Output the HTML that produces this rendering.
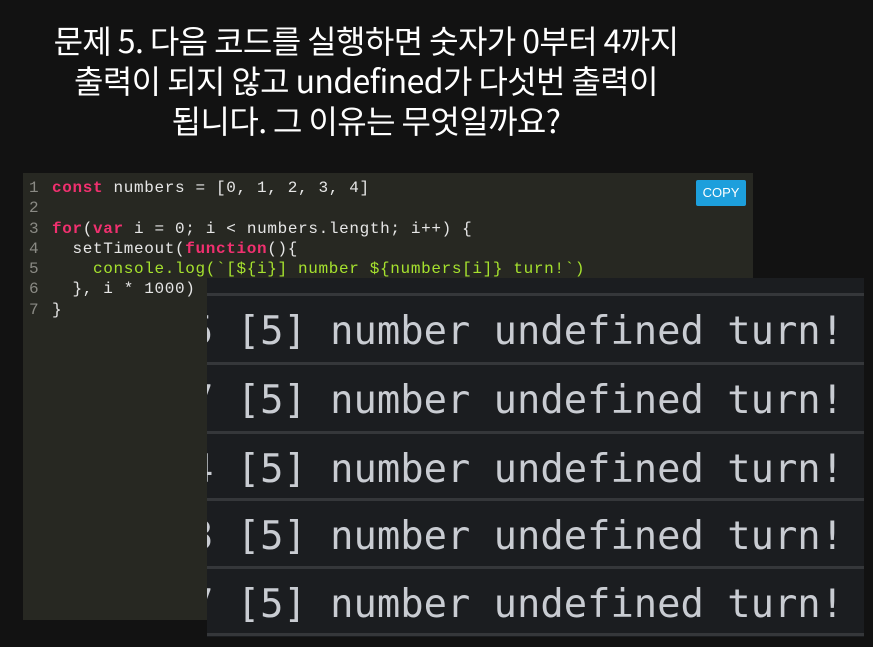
<!DOCTYPE html>
<html><head><meta charset="utf-8"><style>
body{margin:0;width:873px;height:647px;background:#121212;overflow:hidden;position:relative;font-family:"Liberation Sans","Noto Sans CJK KR",sans-serif}
.title{position:absolute;left:0;width:732px;top:20px;text-align:center;color:#fff;font-family:"Noto Sans CJK KR",sans-serif;font-size:32px;line-height:40px;letter-spacing:-0.6px;font-weight:400}
.code{position:absolute;left:23px;top:173px;width:730px;height:447px;background:#272822}
.code pre{margin:0;position:absolute;left:6px;top:5px;font-family:"Liberation Mono",monospace;font-size:16px;line-height:20.3px;color:#e6e6e6;letter-spacing:0.65px}
.n{color:#8a8a84;display:inline-block;width:23px}
.k{color:#f0306f;font-weight:bold}
.s{color:#a6e22e}
.copy{position:absolute;left:696px;top:180px;width:50px;height:26px;background:#1d9fdc;border-radius:2px;color:#fff;font-size:13px;line-height:26px;text-align:center}
.ov{position:absolute;left:207px;top:278px;width:657px;height:359px;background:#1b1d20;overflow:hidden}
.row{position:absolute;left:0;width:657px;height:68px;border-top:3px solid #35373a;box-sizing:border-box}
.row span{position:absolute;left:-17px;top:13px;font-family:"DejaVu Sans Mono",monospace;font-size:38.8px;color:#c9ccd2;white-space:pre}
</style></head><body>
<div class="title">문제 5. 다음 코드를 실행하면 숫자가 0부터 4까지<br>출력이 되지 않고 undefined가 다섯번 출력이<br>됩니다. 그 이유는 무엇일까요?</div>
<div class="code"><pre><span class="n">1</span><span class="k">const</span> numbers = [0, 1, 2, 3, 4]
<span class="n">2</span>
<span class="n">3</span><span class="k">for</span>(<span class="k">var</span> i = 0; i &lt; numbers.length; i++) {
<span class="n">4</span>  setTimeout(<span class="k">function</span>(){
<span class="n">5</span>    <span class="s">console.log(`[${i}] number ${numbers[i]} turn!`)</span>
<span class="n">6</span>  }, i * 1000)
<span class="n">7</span>}</pre></div>
<div class="copy">COPY</div>
<div class="ov">
<div class="row" style="top:15px"><span>5 [5] number undefined turn!</span></div>
<div class="row" style="top:84px"><span>7 [5] number undefined turn!</span></div>
<div class="row" style="top:153px"><span>4 [5] number undefined turn!</span></div>
<div class="row" style="top:220px"><span>3 [5] number undefined turn!</span></div>
<div class="row" style="top:288px"><span>7 [5] number undefined turn!</span></div>
<div class="row" style="top:355px;height:4px"></div>
</div>
</body></html>
